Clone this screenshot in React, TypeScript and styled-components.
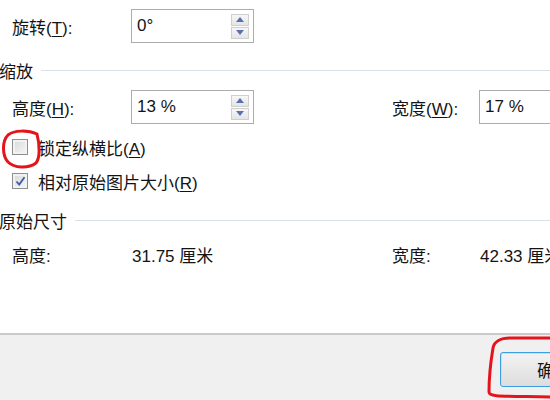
import React from 'react';
import styled, { createGlobalStyle } from 'styled-components';

const GlobalStyle = createGlobalStyle`
    html, body {
        margin: 0;
        padding: 0;
        background: #ffffff;
    }
    body {
        font-family: "Liberation Sans", "Noto Sans CJK SC", sans-serif;
        color: #141414;
    }
`

const Root = styled.div`
    position: relative;
    width: 550px;
    height: 400px;
    overflow: hidden;
`

const Dialog = styled.div`
    width: 640px;
    height: 400px;
    display: flex;
    flex-direction: column;
    font-size: 17px;
`

const Content = styled.div`
    flex: 1;
    background: #ffffff;
    padding-top: 9px;
    display: flex;
    flex-direction: column;
`

const Row = styled.div<{ $top?: number }>`
    display: grid;
    grid-template-columns: 119px 123px 138px 87px 1fr;
    align-items: center;
    height: 34px;
    padding-left: 12px;
    margin-top: ${p => p.$top || 0}px;
`

const Label = styled.div`
    white-space: nowrap;
    u {
        text-decoration-thickness: 1px;
        text-underline-offset: 2px;
    }
`

const Value = styled.div`
    white-space: nowrap;
    padding-left: 1px;
`

const Section = styled.div<{ $top: number }>`
    display: flex;
    align-items: center;
    gap: 8px;
    height: 22px;
    margin-top: ${p => p.$top}px;
    margin-left: -1px;
    &::after {
        content: '';
        flex: 1;
        height: 1px;
        background: #d9e0e8;
    }
`

const InputBox = styled.div<{ $open?: boolean }>`
    box-sizing: border-box;
    height: 34px;
    width: ${p => (p.$open ? '140px' : '123px')};
    border: 1px solid #acacac;
    background: #ffffff;
    display: flex;
    align-items: center;
    padding-left: 5px;
`

const InputText = styled.span`
    flex: 1;
`

const Spinner = styled.div`
    display: flex;
    flex-direction: column;
    gap: 1px;
    margin-right: 4px;
`

const SpinButton = styled.div`
    width: 18px;
    height: 12px;
    box-sizing: border-box;
    border: 1px solid #cfcfcf;
    background: linear-gradient(#f7f7f7, #e4e4e4);
    display: flex;
    align-items: center;
    justify-content: center;
`

const CheckRow = styled.label<{ $top: number }>`
    display: flex;
    align-items: center;
    gap: 10px;
    height: 24px;
    padding-left: 12px;
    margin-top: ${p => p.$top}px;
    white-space: nowrap;
    u {
        text-underline-offset: 2px;
    }
`

const Box = styled.span`
    box-sizing: border-box;
    width: 16px;
    height: 16px;
    border: 1px solid #8e8f8f;
    background: linear-gradient(135deg, #d8d8d8, #f6f6f6);
    box-shadow: inset 0 0 0 2px #f2f2f2;
    display: flex;
    align-items: center;
    justify-content: center;
`

const Footer = styled.div`
    height: 67px;
    box-sizing: border-box;
    background: #f0f0f0;
    border-top: 2px solid #cacaca;
    display: flex;
    justify-content: flex-end;
    padding: 17px 52px 0 0;
`

const OkButton = styled.button`
    box-sizing: border-box;
    width: 88px;
    height: 35px;
    border: 1px solid #3c9fe2;
    border-radius: 3px;
    box-shadow: inset 0 0 0 1px #bfe3f8;
    background: linear-gradient(#f3f3f3, #dddddd);
    font: inherit;
    font-size: 17px;
    color: #141414;
    padding: 0 0 0 36px;
    text-align: left;
`

const Scribble = styled.svg`
    position: absolute;
    left: 0;
    top: 0;
    pointer-events: none;
`

const Arrow = ({ up }: { up?: boolean }) => (
    <svg width="8" height="5" viewBox="0 0 8 5">
        <path d={up ? 'M0 5 L4 0 L8 5 Z' : 'M0 0 L8 0 L4 5 Z'} fill="#5a6fae" />
    </svg>
)

const Spin = ({ value, open }: { value: string; open?: boolean }) => (
    <InputBox $open={open}>
        <InputText>{value}</InputText>
        {!open && (
            <Spinner>
                <SpinButton><Arrow up /></SpinButton>
                <SpinButton><Arrow /></SpinButton>
            </Spinner>
        )}
    </InputBox>
)

const Check = ({ checked }: { checked?: boolean }) => (
    <Box>
        {checked && (
            <svg width="11" height="10" viewBox="0 0 11 10">
                <path d="M1.5 5.5 L4.2 8.5 L9.5 1.2" fill="none" stroke="#3e5aa8" strokeWidth="1.8" />
            </svg>
        )}
    </Box>
)

export default function App() {
    return (
        <Root>
            <GlobalStyle />
            <Dialog>
                <Content>
                    <Row>
                        <Label>旋转(<u>T</u>):</Label>
                        <Spin value="0°" />
                    </Row>
                    <Section $top={16}>缩放</Section>
                    <Row $top={9}>
                        <Label>高度(<u>H</u>):</Label>
                        <Spin value="13 %" />
                        <span />
                        <Label>宽度(<u>W</u>):</Label>
                        <Spin value="17 %" open />
                    </Row>
                    <CheckRow $top={11}>
                        <Check />
                        <span>锁定纵横比(<u>A</u>)</span>
                    </CheckRow>
                    <CheckRow $top={10}>
                        <Check checked />
                        <span>相对原始图片大小(<u>R</u>)</span>
                    </CheckRow>
                    <Section $top={16}>原始尺寸</Section>
                    <Row $top={6}>
                        <Label>高度:</Label>
                        <Value>31.75 厘米</Value>
                        <span />
                        <Label>宽度:</Label>
                        <Value>42.33 厘米</Value>
                    </Row>
                </Content>
                <Footer>
                    <OkButton>确定</OkButton>
                </Footer>
            </Dialog>
            <Scribble width="550" height="400" viewBox="0 0 550 400">
                <path
                    d="M37 134 C28 130, 14 130, 8 135 C2 141, 2 155, 8 162 C14 168, 28 169, 36 163 C40 158, 40 146, 37 134"
                    fill="none" stroke="#e5141c" strokeWidth="3" strokeLinecap="round"
                />
                <path
                    d="M552 338 L510 338 C500 338, 494 342, 493 348 C491 360, 489 380, 489 392 C489 397, 500 396, 552 397"
                    fill="none" stroke="#e5141c" strokeWidth="3" strokeLinecap="round"
                />
            </Scribble>
        </Root>
    );
}
